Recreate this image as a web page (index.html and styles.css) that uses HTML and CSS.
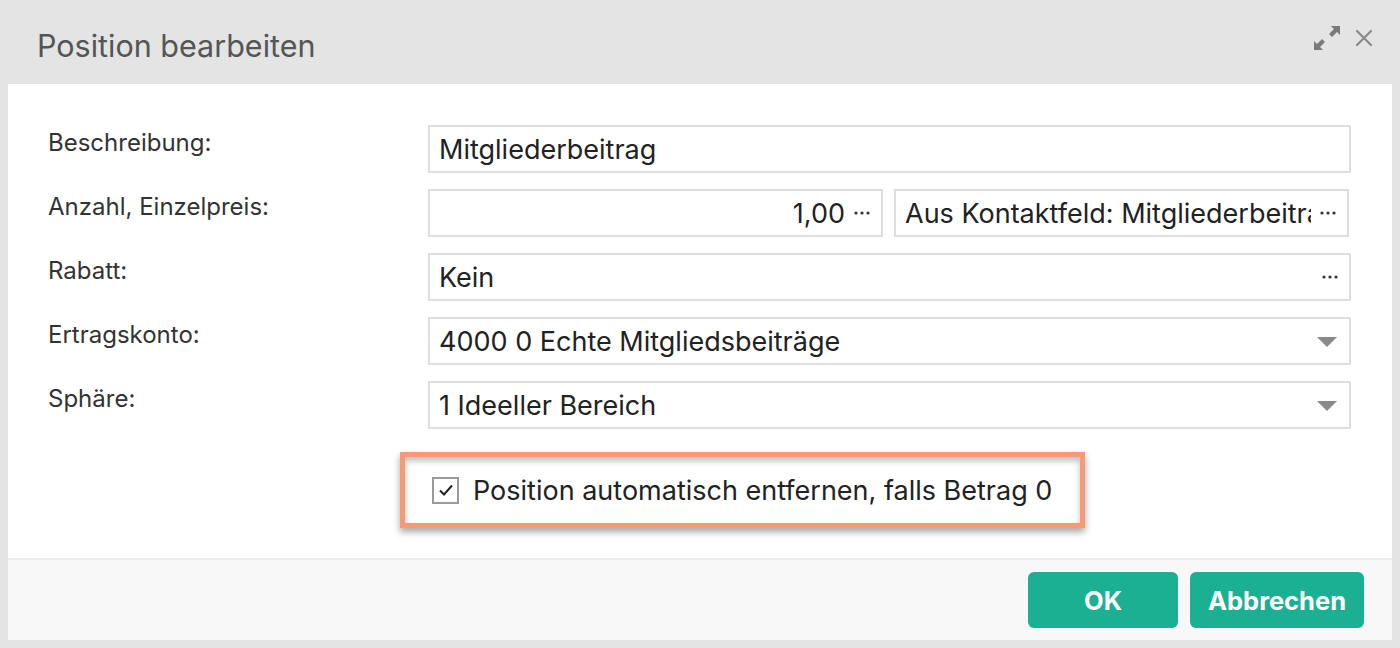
FILE: index.html
```html
<!DOCTYPE html>
<html lang="de">
<head>
<meta charset="utf-8">
<title>Position bearbeiten</title>
<link rel="stylesheet" href="styles.css">
</head>
<body>
<div class="dialog">
  <header class="dialog-head">
    <h1 class="dialog-title">Position bearbeiten</h1>
    <div class="head-tools">
      <svg class="tool-icon" width="28" height="26" viewBox="0 0 28 26" aria-hidden="true">
        <path d="M27 1 L18 1 L21 4 L16 9 L19 12 L24 7 L27 10 Z" fill="#7a7a7a"/>
        <path d="M1 25 L10 25 L7 22 L12 17 L9 14 L4 19 L1 16 Z" fill="#7a7a7a"/>
      </svg>
      <svg class="tool-icon close" width="18" height="18" viewBox="0 0 18 18" aria-hidden="true">
        <path d="M2 2 L16 16 M16 2 L2 16" stroke="#8a8a8a" stroke-width="2.2" stroke-linecap="round"/>
      </svg>
    </div>
  </header>

  <main class="dialog-body">
    <div class="form">
      <label class="form-label">Beschreibung:</label>
      <div class="field"><span class="field-text">Mitgliederbeitrag</span></div>

      <label class="form-label">Anzahl, Einzelpreis:</label>
      <div class="field-pair">
        <div class="field trigger align-right">
          <span class="field-text">1,00</span>
          <svg class="dots" width="16" height="4" viewBox="0 0 16 4" aria-hidden="true"><circle cx="2" cy="2" r="1.6"/><circle cx="8" cy="2" r="1.6"/><circle cx="14" cy="2" r="1.6"/></svg>
        </div>
        <div class="field trigger">
          <span class="field-text">Aus Kontaktfeld: Mitgliederbeitrag</span>
          <svg class="dots" width="16" height="4" viewBox="0 0 16 4" aria-hidden="true"><circle cx="2" cy="2" r="1.6"/><circle cx="8" cy="2" r="1.6"/><circle cx="14" cy="2" r="1.6"/></svg>
        </div>
      </div>

      <label class="form-label">Rabatt:</label>
      <div class="field trigger">
        <span class="field-text">Kein</span>
        <svg class="dots" width="16" height="4" viewBox="0 0 16 4" aria-hidden="true"><circle cx="2" cy="2" r="1.6"/><circle cx="8" cy="2" r="1.6"/><circle cx="14" cy="2" r="1.6"/></svg>
      </div>

      <label class="form-label">Ertragskonto:</label>
      <div class="field select"><span class="field-text">4000 0 Echte Mitgliedsbeiträge</span><span class="caret"></span></div>

      <label class="form-label">Sphäre:</label>
      <div class="field select"><span class="field-text">1 Ideeller Bereich</span><span class="caret"></span></div>
    </div>

    <div class="check-row">
      <div class="highlight">
        <span class="checkbox">
          <svg width="18" height="18" viewBox="0 0 18 18" aria-hidden="true">
            <path d="M3 9.5 L7 13.5 L15 4.5" fill="none" stroke="#222" stroke-width="2"/>
          </svg>
        </span>
        <span class="check-label">Position automatisch entfernen, falls Betrag 0</span>
      </div>
    </div>
  </main>

  <footer class="dialog-foot">
    <button class="btn btn-ok">OK</button>
    <button class="btn">Abbrechen</button>
  </footer>
</div>
</body>
</html>
```

FILE: styles.css
```css
html, body {
  margin: 0;
  padding: 0;
}

body {
  background: #e4e4e4;
  width: 1400px;
  height: 648px;
  overflow: hidden;
  font-family: Inter, "Liberation Sans", Arial, sans-serif;
  color: #222;
}

.dialog {
  margin: 0 8px;
  display: flex;
  flex-direction: column;
}

/* title bar */
.dialog-head {
  height: 84px;
  box-sizing: border-box;
  display: flex;
  align-items: center;
  justify-content: space-between;
  padding: 0 19px 0 29px;
}

.dialog-title {
  margin: 0;
  font-weight: 400;
  font-size: 30.5px;
  color: #555;
  padding-top: 6px;
}

.head-tools {
  display: flex;
  align-items: center;
  gap: 14px;
  padding-bottom: 8px;
}

/* form area */
.dialog-body {
  background: #fff;
  padding: 41px 41px 30px 40px;
}

.form {
  display: grid;
  grid-template-columns: 380px 1fr;
  row-gap: 16px;
}

.form-label {
  font-size: 24px;
  line-height: 28px;
  color: #333;
  padding-top: 4px;
}

.field {
  height: 48px;
  box-sizing: border-box;
  border: 2px solid #dedede;
  display: flex;
  align-items: center;
  padding: 0 11px 0 9px;
  font-size: 27px;
  color: #222;
  overflow: hidden;
}

.field-text {
  flex: 1;
  min-width: 0;
  white-space: nowrap;
  overflow: hidden;
}

.field-pair {
  display: grid;
  grid-template-columns: 455px 455px;
  column-gap: 11px;
}

.align-right .field-text {
  text-align: right;
}

.dots {
  flex: none;
  fill: #333;
  margin-left: 9px;
}

.caret {
  flex: none;
  width: 0;
  height: 0;
  border-left: 10px solid transparent;
  border-right: 10px solid transparent;
  border-top: 10px solid #8a8a8a;
  margin-right: 1px;
  margin-top: 2px;
}

/* checkbox option */
.check-row {
  padding: 23px 0 0 352px;
}

.highlight {
  display: inline-flex;
  align-items: center;
  box-sizing: border-box;
  width: 685px;
  height: 76px;
  border: 5px solid #f79a74;
  box-shadow: 0 4px 7px rgba(0, 0, 0, 0.35), inset 0 4px 6px rgba(0, 0, 0, 0.25);
  padding-left: 27px;
  background: #fff;
}

.checkbox {
  flex: none;
  width: 27px;
  height: 27px;
  box-sizing: border-box;
  border: 2px solid #9a9a9a;
  display: inline-flex;
  align-items: center;
  justify-content: center;
  margin-right: 14px;
}

.check-label {
  font-size: 27px;
  color: #222;
  white-space: nowrap;
}

/* footer */
.dialog-foot {
  background: #f8f8f8;
  border-top: 2px solid #ececec;
  height: 82px;
  box-sizing: border-box;
  display: flex;
  justify-content: flex-end;
  align-items: flex-start;
  gap: 12px;
  padding: 12px 28px 0 0;
}

.btn {
  height: 56px;
  border: none;
  border-radius: 6px;
  background: #1cb093;
  color: #fff;
  font-family: inherit;
  font-weight: 700;
  font-size: 25.5px;
  width: 174px;
  padding: 0;
}

.btn-ok {
  width: 150px;
}
```
